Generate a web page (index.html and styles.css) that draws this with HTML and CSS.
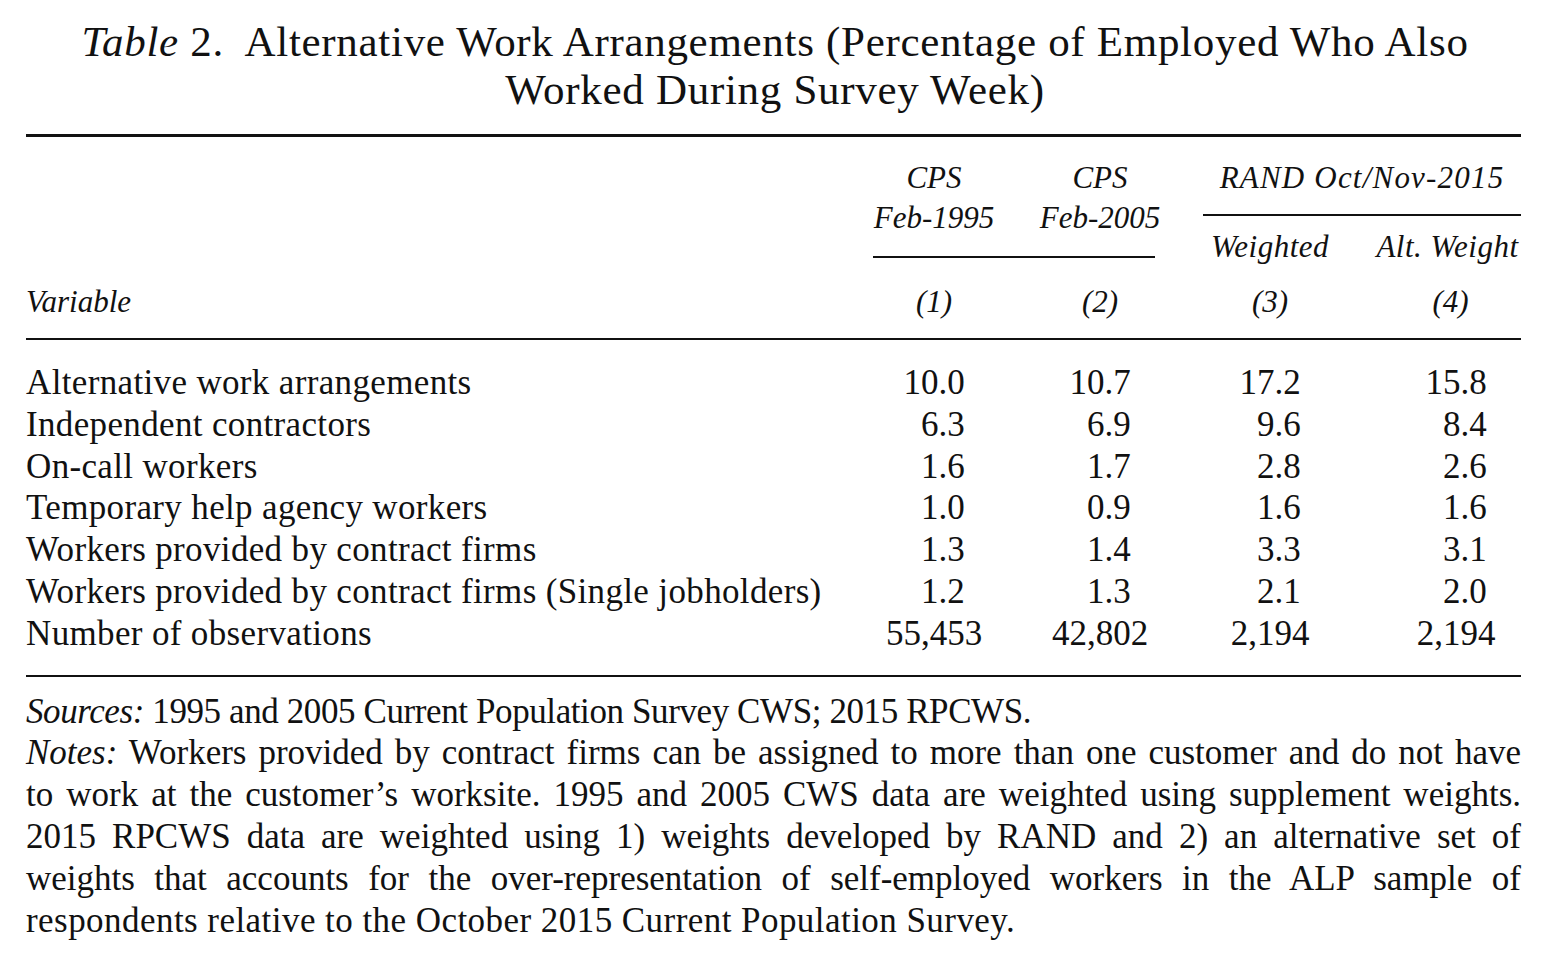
FILE: index.html
```html
<!DOCTYPE html>
<html lang="en">
<head>
<meta charset="utf-8">
<title>Table 2. Alternative Work Arrangements</title>
<link rel="stylesheet" href="styles.css">
</head>
<body>
<div class="page">
  <h1 class="title"><em>Table</em> 2.&nbsp; Alternative Work Arrangements (Percentage of Employed Who Also<br>Worked During Survey Week)</h1>
  <div class="rule rule-top"></div>

  <div class="thead">
    <div class="h-var"><div class="h-line">Variable</div></div>
    <div class="h-cps">
      <div class="h-pair h-two">
        <div class="h-c1">CPS<br>Feb-1995</div>
        <div class="h-c2">CPS<br>Feb-2005</div>
      </div>
      <div class="rule rule-cps"></div>
      <div class="h-pair h-nums">
        <div class="h-c1">(1)</div>
        <div class="h-c2">(2)</div>
      </div>
    </div>
    <div class="h-rand">
      <div class="rand-title">RAND Oct/Nov-2015</div>
      <div class="rule rule-rand"></div>
      <div class="h-pair h-sub">
        <div class="h-c3">Weighted</div>
        <div class="h-c4">Alt. Weight</div>
      </div>
      <div class="h-pair h-nums">
        <div class="h-c3">(3)</div>
        <div class="h-c4">(4)</div>
      </div>
    </div>
  </div>
  <div class="rule rule-mid"></div>

  <div class="tbody">
    <div class="row"><div class="label">Alternative work arrangements</div><div class="c1"><span class="n">10.0</span></div><div class="c2"><span class="n">10.7</span></div><div class="c3"><span class="n">17.2</span></div><div class="c4"><span class="n">15.8</span></div></div>
    <div class="row"><div class="label">Independent contractors</div><div class="c1"><span class="n">6.3</span></div><div class="c2"><span class="n">6.9</span></div><div class="c3"><span class="n">9.6</span></div><div class="c4"><span class="n">8.4</span></div></div>
    <div class="row"><div class="label">On-call workers</div><div class="c1"><span class="n">1.6</span></div><div class="c2"><span class="n">1.7</span></div><div class="c3"><span class="n">2.8</span></div><div class="c4"><span class="n">2.6</span></div></div>
    <div class="row"><div class="label">Temporary help agency workers</div><div class="c1"><span class="n">1.0</span></div><div class="c2"><span class="n">0.9</span></div><div class="c3"><span class="n">1.6</span></div><div class="c4"><span class="n">1.6</span></div></div>
    <div class="row"><div class="label">Workers provided by contract firms</div><div class="c1"><span class="n">1.3</span></div><div class="c2"><span class="n">1.4</span></div><div class="c3"><span class="n">3.3</span></div><div class="c4"><span class="n">3.1</span></div></div>
    <div class="row"><div class="label">Workers provided by contract firms (Single jobholders)</div><div class="c1"><span class="n">1.2</span></div><div class="c2"><span class="n">1.3</span></div><div class="c3"><span class="n">2.1</span></div><div class="c4"><span class="n">2.0</span></div></div>
    <div class="row"><div class="label">Number of observations</div><div class="c1"><span class="n">55,453</span></div><div class="c2"><span class="n">42,802</span></div><div class="c3"><span class="n">2,194</span></div><div class="c4"><span class="n">2,194</span></div></div>
  </div>
  <div class="rule rule-bot"></div>

  <div class="notes">
    <div class="note-line last note-sources"><em>Sources:</em> 1995 and 2005 Current Population Survey CWS; 2015 RPCWS.</div>
    <div class="note-line"><em>Notes:</em> Workers provided by contract firms can be assigned to more than one customer and do not have</div>
    <div class="note-line">to work at the customer’s worksite. 1995 and 2005 CWS data are weighted using supplement weights.</div>
    <div class="note-line">2015 RPCWS data are weighted using 1) weights developed by RAND and 2) an alternative set of</div>
    <div class="note-line">weights that accounts for the over-representation of self-employed workers in the ALP sample of</div>
    <div class="note-line last note-end">respondents relative to the October 2015 Current Population Survey.</div>
  </div>
</div>
</body>
</html>
```

FILE: styles.css
```css
html, body {
  margin: 0;
  padding: 0;
  background: #ffffff;
}

body {
  font-family: "Liberation Serif", "Times New Roman", serif;
  color: #111111;
}

.page {
  width: 1495px;
  padding: 0 29px 0 26px;
}

.title {
  margin: 18px 0 0 -26px;
  width: 1550px;
  font-size: 43px;
  font-weight: normal;
  line-height: 48px;
  letter-spacing: 0.7px;
  text-align: center;
}

.title em {
  font-style: italic;
}

.rule {
  background: #111111;
  height: 2px;
}

.rule-top {
  margin-top: 20px;
  height: 3px;
}

/* ---------- header ---------- */
.thead {
  display: flex;
  align-items: flex-end;
  font-size: 31px;
  font-style: italic;
  line-height: 40px;
}

.h-var {
  width: 826px;
  padding-bottom: 15px;
}

.h-line {
  line-height: 42px;
}

.h-cps {
  width: 332px;
  padding-top: 21px;
  padding-bottom: 15px;
}

.h-rand {
  width: 337px;
  padding-top: 21px;
  padding-bottom: 15px;
}

.h-pair {
  display: flex;
  text-align: center;
}

.h-c1 { width: 164px; }
.h-c2 { width: 168px; }
.h-c3 { width: 172px; }
.h-c4 { width: 147px; padding-left: 18px; white-space: nowrap; }

.rule-cps {
  margin: 18px 29px 0 21px;
}

.h-cps .h-nums {
  margin-top: 23px;
}

.h-nums {
  line-height: 42px;
}

.h-nums .h-c4 {
  width: 141px;
  padding-left: 24px;
}

.rand-title {
  margin-left: 19px;
  text-align: center;
  letter-spacing: 1.2px;
}

.rule-rand {
  margin: 16px 0 0 19px;
}

.h-sub {
  margin-top: 11px;
  letter-spacing: 0.5px;
}

.h-rand .h-nums {
  margin-top: 14px;
}

/* ---------- body ---------- */
.tbody {
  padding: 22px 0 20px 0;
  font-size: 35px;
}

.row {
  display: grid;
  grid-template-columns: 826px 164px 168px 172px 165px;
  height: 41.8px;
  line-height: 42px;
}

.row .label {
  white-space: nowrap;
  letter-spacing: 0.35px;
}

.row .c1,
.row .c2,
.row .c3,
.row .c4 {
  text-align: center;
}

.row .c4 {
  padding-left: 35px;
}

.n {
  display: inline-block;
  min-width: 1.75em;
  text-align: right;
}

/* ---------- notes ---------- */
.notes {
  margin-top: 14px;
  font-size: 35px;
  line-height: 41.8px;
}

.note-line {
  text-align: justify;
  text-align-last: justify;
}

.note-line.last {
  text-align: left;
  text-align-last: left;
}

.note-sources {
  letter-spacing: -0.4px;
}

.note-end {
  letter-spacing: 0.45px;
}
```
